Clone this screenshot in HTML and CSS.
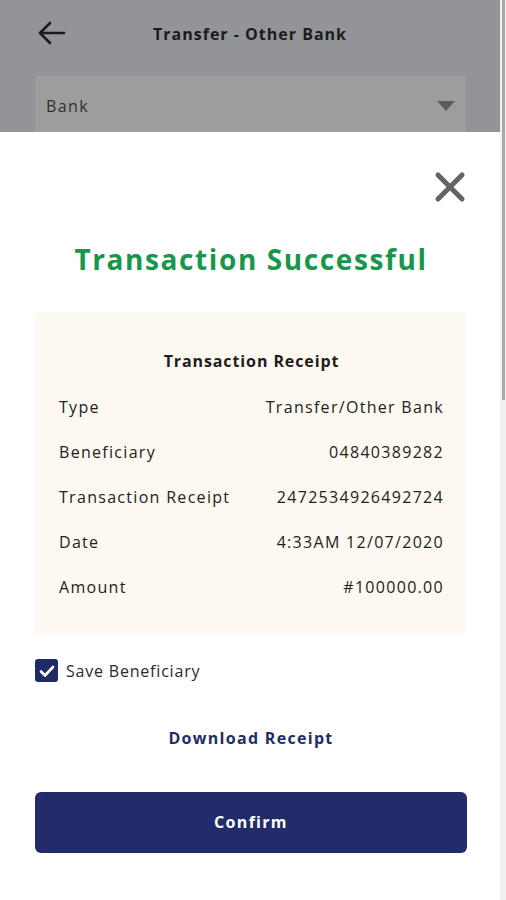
FILE: index.html
```html
<!DOCTYPE html>
<html>
<head>
<meta charset="utf-8">
<link rel="stylesheet" href="styles.css">
</head>
<body>
<div class="app">
  <div class="main">
    <div class="backdrop">
      <header class="topbar">
        <svg class="back" width="28" height="24" viewBox="0 0 28 24"><path d="M26 12H3M12 2L2 12l10 10" fill="none" stroke="#1b1b1d" stroke-width="2.6" stroke-linecap="round" stroke-linejoin="round"/></svg>
        <h1 class="title">Transfer - Other Bank</h1>
      </header>
      <div class="field">
        <span class="field-label">Bank</span>
        <span class="caret"></span>
      </div>
    </div>
    <section class="sheet">
      <div class="close-row">
        <svg class="close" width="32" height="32" viewBox="0 0 32 32"><path d="M4 4L28 28M28 4L4 28" stroke="#646464" stroke-width="5" stroke-linecap="round"/></svg>
      </div>
      <h2 class="success">Transaction Successful</h2>
      <div class="card">
        <div class="card-title">Transaction Receipt</div>
        <div class="row"><span>Type</span><span>Transfer/Other Bank</span></div>
        <div class="row"><span>Beneficiary</span><span>04840389282</span></div>
        <div class="row"><span>Transaction Receipt</span><span>2472534926492724</span></div>
        <div class="row"><span>Date</span><span>4:33AM 12/07/2020</span></div>
        <div class="row"><span>Amount</span><span>#100000.00</span></div>
      </div>
      <label class="check">
        <span class="box"><svg width="16" height="14" viewBox="0 0 16 14"><path d="M2 7.5l4 4L14 3" fill="none" stroke="#fff" stroke-width="2.6" stroke-linecap="round" stroke-linejoin="round"/></svg></span>
        <span class="check-label">Save Beneficiary</span>
      </label>
      <div class="download">Download Receipt</div>
      <button class="confirm">Confirm</button>
    </section>
  </div>
  <div class="scrollbar"><div class="thumb"></div></div>
</div>
</body>
</html>
```
FILE: styles.css
```css
* { box-sizing: border-box; }
html, body { margin: 0; padding: 0; }
body {
  width: 506px;
  height: 900px;
  overflow: hidden;
  font-family: "Open Sans", "Noto Sans", sans-serif;
  background: #fff;
}
.app { display: flex; height: 900px; }
.main { width: 500px; display: flex; flex-direction: column; }
.scrollbar {
  width: 6px;
  background: #f1f1f1;
  display: flex;
  justify-content: center;
}
.thumb {
  width: 3px;
  height: 400px;
  background: #a9a9a9;
}
.backdrop {
  height: 132px;
  background: #939497;
  overflow: hidden;
}
.topbar {
  height: 68px;
  display: flex;
  align-items: center;
  position: relative;
  padding-left: 38px;
}
.back { display: block; margin-top: -2px; }
.title {
  position: absolute;
  left: 0; right: 0;
  text-align: center;
  margin: 0;
  font-size: 16px;
  font-weight: 700;
  letter-spacing: 1px;
  color: #1b1b1d;
}
.field {
  margin: 8px 34px 0 35px;
  height: 64px;
  background: #9d9d9e;
  display: flex;
  align-items: center;
  justify-content: space-between;
  padding: 0 11px 4px 11px;
}
.field-label { font-size: 16px; color: #303032; letter-spacing: 1.4px; }
.caret {
  width: 0; height: 0;
  border-left: 9px solid transparent;
  border-right: 9px solid transparent;
  border-top: 10px solid #5c5c5e;
}
.sheet {
  flex: 1;
  background: #fff;
  display: flex;
  flex-direction: column;
  padding: 0 33px 0 35px;
}
.close-row {
  display: flex;
  justify-content: flex-end;
  padding-top: 39px;
  padding-right: 1px;
}
.close { display: block; }
.success {
  margin: 38px 0 0;
  text-align: center;
  font-size: 28px;
  line-height: 36px;
  font-weight: 700;
  color: #17974a;
  letter-spacing: 1.6px;
}
.card {
  margin-top: 36px;
  background: #fdf9f0;
  padding: 26px 23px 24px 24px;
  height: 320px;
}
.card-title {
  height: 45px;
  line-height: 45px;
  text-align: center;
  font-size: 16px;
  font-weight: 700;
  color: #1d1d1f;
  letter-spacing: 0.9px;
}
.row {
  height: 45px;
  display: flex;
  align-items: center;
  justify-content: space-between;
  font-size: 16px;
  color: #222;
  letter-spacing: 1.3px;
}
.check {
  margin-top: 26px;
  display: flex;
  align-items: center;
  gap: 8px;
}
.box {
  width: 23px; height: 23px;
  border-radius: 3px;
  background: #202a67;
  display: flex;
  align-items: center;
  justify-content: center;
}
.check-label {
  font-size: 16px;
  color: #2a2a2c;
  letter-spacing: 0.8px;
}
.download {
  margin-top: 45px;
  text-align: center;
  font-size: 16px;
  font-weight: 700;
  color: #222c66;
  letter-spacing: 1.3px;
  line-height: 22px;
}
.confirm {
  margin-top: 43px;
  height: 61px;
  width: 432px;
  border: none;
  border-radius: 6px;
  background: #222c6a;
  color: #fff;
  font-family: inherit;
  font-size: 16px;
  font-weight: 700;
  letter-spacing: 1.3px;
  padding-bottom: 2px;
}
```
